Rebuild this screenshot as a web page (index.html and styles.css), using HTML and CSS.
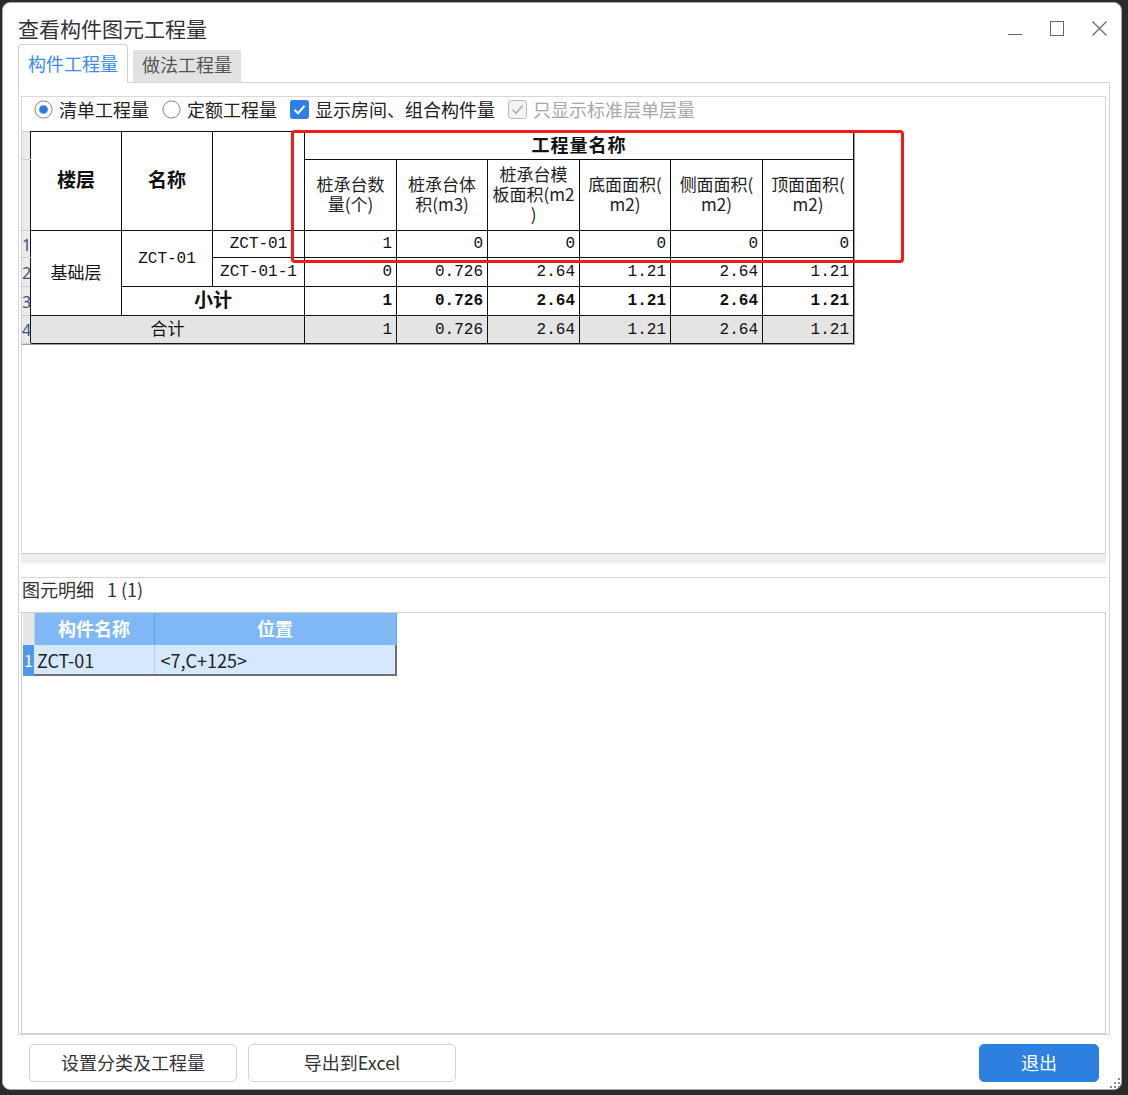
FILE: index.html
```html
<!DOCTYPE html>
<html lang="zh-CN">
<head>
<meta charset="utf-8">
<title>查看构件图元工程量</title>
<link rel="stylesheet" href="styles.css">
</head>
<body>
<div class="window">
  <div class="titlebar">
    <div class="title">查看构件图元工程量</div>
    <div class="controls">
      <svg width="14" height="15" viewBox="0 0 14 15"><line x1="0" y1="13.5" x2="14" y2="13.5" stroke="#666" stroke-width="1"/></svg>
      <svg width="14" height="15" viewBox="0 0 14 15"><rect x="0.5" y="0.5" width="13" height="14" fill="none" stroke="#666" stroke-width="1"/></svg>
      <svg width="15" height="15" viewBox="0 0 15 15"><path d="M0.5 0.5 L14.5 14.5 M14.5 0.5 L0.5 14.5" stroke="#666" stroke-width="1.2"/></svg>
    </div>
  </div>

  <div class="tabs">
    <div class="tab active">构件工程量</div>
    <div class="tab">做法工程量</div>
  </div>

  <div class="pane">
    <div class="upper">
      <div class="options">
        <span class="opt">
          <svg width="19" height="19" viewBox="0 0 20 20"><circle cx="10" cy="10" r="9" fill="#fff" stroke="#7a7a7a" stroke-width="1"/><circle cx="10" cy="10" r="4.6" fill="#2b7be3"/></svg>
          <span>清单工程量</span>
        </span>
        <span class="opt">
          <svg width="19" height="19" viewBox="0 0 20 20"><circle cx="10" cy="10" r="9" fill="#fff" stroke="#7a7a7a" stroke-width="1"/></svg>
          <span>定额工程量</span>
        </span>
        <span class="opt">
          <svg width="19" height="19" viewBox="0 0 19 19"><rect x="0" y="0" width="19" height="19" rx="3" fill="#2f7fe3"/><path d="M4.5 9.8 L8 13.2 L14.5 5.8" fill="none" stroke="#fff" stroke-width="2"/></svg>
          <span>显示房间、组合构件量</span>
        </span>
        <span class="opt disabled">
          <svg width="19" height="19" viewBox="0 0 19 19"><rect x="0.5" y="0.5" width="18" height="18" rx="3" fill="#f3f3f3" stroke="#b8b8b8"/><path d="M4.5 9.8 L8 13.2 L14.5 5.8" fill="none" stroke="#a9a9a9" stroke-width="1.6"/></svg>
          <span>只显示标准层单层量</span>
        </span>
      </div>

      <table class="qty">
        <colgroup>
          <col class="w9"><col class="w91"><col class="w91"><col class="w92">
          <col class="w92"><col class="w91"><col class="w92"><col class="w91"><col class="w92"><col class="w91">
        </colgroup>
        <tr class="h1">
          <td class="rh"></td>
          <th rowspan="2" class="big">楼层</th>
          <th rowspan="2" class="big">名称</th>
          <th rowspan="2"></th>
          <th colspan="6" class="grp">工程量名称</th>
        </tr>
        <tr class="h2">
          <td class="rh"></td>
          <th class="sub">桩承台数<br>量(个)</th>
          <th class="sub">桩承台体<br>积(m3)</th>
          <th class="sub">桩承台模<br>板面积(m2<br>)</th>
          <th class="sub">底面面积(<br>m2)</th>
          <th class="sub">侧面面积(<br>m2)</th>
          <th class="sub">顶面面积(<br>m2)</th>
        </tr>
        <tr class="r1">
          <td class="rh">1</td>
          <td rowspan="3" class="cn">基础层</td>
          <td rowspan="2" class="code">ZCT-01</td>
          <td class="code">ZCT-01</td>
          <td class="n">1</td><td class="n">0</td><td class="n">0</td><td class="n">0</td><td class="n">0</td><td class="n">0</td>
        </tr>
        <tr class="r2">
          <td class="rh">2</td>
          <td class="code">ZCT-01-1</td>
          <td class="n">0</td><td class="n">0.726</td><td class="n">2.64</td><td class="n">1.21</td><td class="n">2.64</td><td class="n">1.21</td>
        </tr>
        <tr class="r3">
          <td class="rh">3</td>
          <td colspan="2" class="sum">小计</td>
          <td class="n b">1</td><td class="n b">0.726</td><td class="n b">2.64</td><td class="n b">1.21</td><td class="n b">2.64</td><td class="n b">1.21</td>
        </tr>
        <tr class="r4">
          <td class="rh">4</td>
          <td colspan="3" class="total">合计</td>
          <td class="n">1</td><td class="n">0.726</td><td class="n">2.64</td><td class="n">1.21</td><td class="n">2.64</td><td class="n">1.21</td>
        </tr>
      </table>

      <div class="mark"></div>
    </div>

    <div class="splitter"></div>

    <div class="lower-label">图元明细<span class="count">1 (1)</span></div>

    <div class="grid">
      <table class="detail">
        <colgroup><col class="w11"><col class="w120"><col class="w242"></colgroup>
        <tr class="dh">
          <td class="drh"></td>
          <th>构件名称</th>
          <th>位置</th>
        </tr>
        <tr class="dr">
          <td class="drh sel">1</td>
          <td class="c1">ZCT-01</td>
          <td class="c2">&lt;7,C+125&gt;</td>
        </tr>
      </table>
    </div>
  </div>

  <div class="buttons">
    <div class="btn">设置分类及工程量</div>
    <div class="btn">导出到Excel</div>
    <div class="btn primary">退出</div>
  </div>

  <svg class="grip" width="12" height="12" viewBox="0 0 12 12">
    <rect x="9" y="1" width="2" height="2" fill="#8a8a8a"/>
    <rect x="5" y="5" width="2" height="2" fill="#8a8a8a"/>
    <rect x="9" y="5" width="2" height="2" fill="#8a8a8a"/>
    <rect x="1" y="9" width="2" height="2" fill="#8a8a8a"/>
    <rect x="5" y="9" width="2" height="2" fill="#8a8a8a"/>
    <rect x="9" y="9" width="2" height="2" fill="#8a8a8a"/>
  </svg>
</div>
</body>
</html>
```

FILE: styles.css
```css
* { box-sizing: border-box; }
html, body { margin: 0; padding: 0; }
body {
  width: 1128px;
  height: 1095px;
  overflow: hidden;
  background: #2b2b2b;
  font-family: "Noto Sans CJK SC", "Noto Sans", sans-serif;
  color: #222;
}

.window {
  margin: 2px 0 0 2px;
  width: 1120px;
  height: 1088px;
  background: #fff;
  border: 1px solid #a8a8a8;
  border-radius: 8px;
  position: relative;
  display: flex;
  flex-direction: column;
}

/* title bar */
.titlebar {
  display: flex;
  justify-content: space-between;
  align-items: flex-start;
  height: 41px;
  padding: 13px 14px 0 15px;
}
.title {
  font-size: 21px;
  line-height: 24px;
  color: #333;
}
.controls {
  display: flex;
  gap: 28px;
  margin-top: 5px;
}
.controls svg { display: block; }

/* tabs */
.tabs {
  display: flex;
  align-items: flex-end;
  gap: 5px;
  height: 38px;
  padding-left: 15px;
  position: relative;
  z-index: 1;
}
.tab {
  height: 32px;
  padding: 0 9px;
  background: #e2e2e2;
  color: #555;
  font-size: 18px;
  line-height: 29px;
}
.tab.active {
  height: 39px;
  margin-bottom: -1px;
  padding: 0 9px;
  background: #fff;
  color: #3a8ce6;
  border: 1px solid #d0d0d0;
  border-bottom: none;
  border-radius: 4px 4px 0 0;
  line-height: 36px;
}

/* pane */
.pane {
  margin-left: 15px;
  width: 1092px;
  height: 953px;
  border: 1px solid #d4d4d4;
  padding: 13px 1px 0 1px;
  display: flex;
  flex-direction: column;
}

.upper {
  margin: 0 2px 0 1px;
  height: 458px;
  border: 1px solid #d8d8d8;
  border-bottom-color: #cbcbcb;
  position: relative;
}

.options {
  display: flex;
  align-items: center;
  height: 27px;
  padding-left: 12px;
  padding-bottom: 2px;
  font-size: 18px;
  line-height: 24px;
  color: #222;
}
.opt {
  display: flex;
  align-items: center;
  gap: 6px;
  margin-right: 13px;
}
.opt span { position: relative; top: -1px; }
.opt svg { display: block; }
.opt.disabled { color: #a8a8a8; }

/* quantity table */
.qty {
  border-collapse: collapse;
  table-layout: fixed;
  width: 832px;
  margin: 7px 0 0 -1px;
  font-size: 17px;
  color: #111;
  box-shadow: 1px 1px 0 #9a9a9a;
}
.w9 { width: 9px; }
.w91 { width: 91px; }
.w92 { width: 92px; }
.qty td, .qty th {
  border: 1px solid #111;
  padding: 0;
  overflow: visible;
  white-space: nowrap;
}
.qty th {
  font-weight: bold;
  font-size: 19px;
  text-align: center;
}
.qty th.big { padding-bottom: 6px; }
.qty th.grp {
  font-size: 18px;
  letter-spacing: 1px;
  padding-bottom: 4px;
  line-height: 22px;
}
.qty th.sub {
  font-weight: normal;
  font-size: 17px;
  line-height: 20px;
  color: #222;
  padding-bottom: 3px;
}
.h1 { height: 28px; }
.h2 { height: 71px; }
.r1 { height: 27px; }
.r2 { height: 29px; }
.r3 { height: 29px; }
.r4 { height: 28px; }

.qty td.rh {
  background: #ebebeb;
  border-color: #d0d0d0;
  border-right-color: #111;
  font-family: "Noto Sans", sans-serif;
  font-size: 16px;
  color: #3f5080;
  text-align: left;
  line-height: 16px;
  padding-top: 1px;
}
.cn {
  text-align: center;
  font-size: 17px;
  padding-bottom: 4px !important;
}
.code {
  text-align: center;
  font-family: "Liberation Mono", monospace;
  font-size: 16px;
}
.n {
  text-align: right;
  padding-right: 4px !important;
  font-family: "Liberation Mono", monospace;
  font-size: 16px;
}
.n.b { font-weight: bold; }
.sum {
  text-align: center;
  font-weight: bold;
  font-size: 19px;
  line-height: 22px;
  padding-bottom: 4px !important;
}
.r4 td { background: #e4e4e4; }
.total {
  text-align: center;
  font-size: 17px;
  line-height: 22px;
  padding-bottom: 3px !important;
}

.mark {
  position: absolute;
  left: 269px;
  top: 33px;
  width: 613px;
  height: 133px;
  border: 3px solid #f01b1b;
  border-radius: 4px;
  pointer-events: none;
}

.splitter {
  height: 9px;
  margin: 0 2px 0 1px;
  background: #efefef;
}

.lower-label {
  margin: 14px 2px 0 1px;
  height: 35px;
  border-top: 1px solid #d6d6d6;
  padding-left: 1px;
  font-size: 18px;
  line-height: 22px;
  color: #333;
}
.count { margin-left: 13px; }

.grid {
  flex: 1;
  margin: 0 2px 0 1px;
  border: 1px solid #cfcfcf;
  padding: 0 0 0 1px;
}

.detail {
  border-collapse: collapse;
  table-layout: fixed;
  width: 373px;
}
.w11 { width: 11px; }
.w120 { width: 120px; }
.w242 { width: 242px; }
.detail th, .detail td { padding: 0; white-space: nowrap; }
.dh { height: 32px; }
.dh th {
  background: #7fb8f5;
  color: #fff;
  font-weight: bold;
  font-size: 18px;
  text-align: center;
  border-right: 1px solid #63a3ea;
  padding-bottom: 2px;
}
.dh .drh {
  background: #e6e6e6;
  border-right: 1px solid #cfcfcf;
}
.dr { height: 30px; }
.dr td {
  background: #d6e8fc;
  font-size: 18px;
  color: #222;
  border-bottom: 2px solid #707070;
  border-right: 1px solid #b9d0ea;
}
.dr td.c2 { border-right: 2px solid #707070; padding-left: 6px; }
.dr td.c1 { padding-left: 3px; }
.dr td.drh.sel {
  background: #4f98ec;
  color: #fff;
  text-align: center;
  font-size: 16px;
  border-right: none;
  border-bottom-color: #4f98ec;
}

/* buttons */
.buttons {
  display: flex;
  gap: 11px;
  margin-top: 9px;
  padding: 0 22px 0 26px;
}
.btn {
  width: 208px;
  height: 38px;
  border: 1px solid #d2d2d2;
  border-radius: 5px;
  background: #fff;
  color: #333;
  font-size: 18px;
  display: flex;
  align-items: center;
  justify-content: center;
  padding-bottom: 2px;
}
.btn.primary {
  width: 120px;
  margin-left: auto;
  background: #2e80e0;
  border-color: #2e80e0;
  color: #fff;
}

.grip {
  position: absolute;
  right: 0;
  bottom: 0;
  display: block;
}
```
